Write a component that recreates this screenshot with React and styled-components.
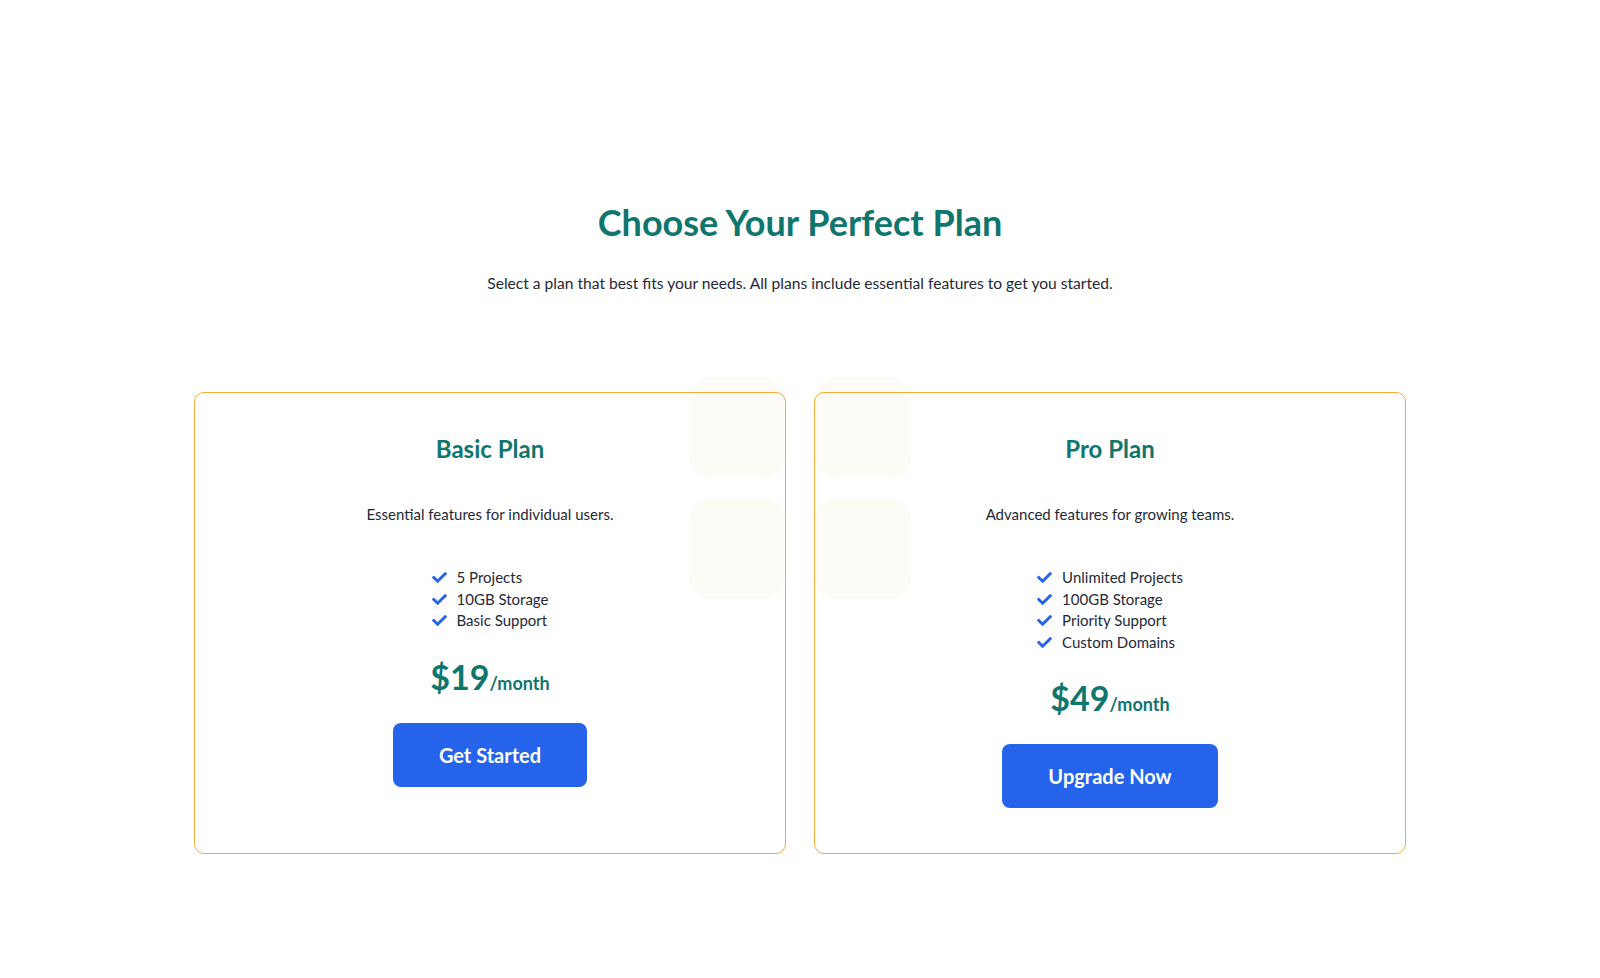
import React from 'react'
import styled, { createGlobalStyle } from 'styled-components'
import { FaCheck } from 'react-icons/fa'

const GlobalStyle = createGlobalStyle`
    body {
        margin: 0;
        background: #fff;
        font-family: Lato, "Noto Sans", sans-serif;
        color: #1f2937;
    }
`;

const plans = [
    {
        name: 'Basic Plan',
        description: 'Essential features for individual users.',
        features: ['5 Projects', '10GB Storage', 'Basic Support'],
        price: '$19',
        cta: 'Get Started',
    },
    {
        name: 'Pro Plan',
        description: 'Advanced features for growing teams.',
        features: ['Unlimited Projects', '100GB Storage', 'Priority Support', 'Custom Domains'],
        price: '$49',
        cta: 'Upgrade Now',
    },
];

const App = () => {
  return (
    <>
        <GlobalStyle />
        <Section>
            <Title>Choose Your Perfect Plan</Title>
            <Subtitle>Select a plan that best fits your needs. All plans include essential features to get you started.</Subtitle>

            <CardsArea>
                <Blobs>
                    <Blob />
                    <Blob />
                    <Blob />
                    <Blob />
                </Blobs>
                <Grid>
                    {plans.map(plan => (
                        <Card key={plan.name}>
                            <PlanName>{plan.name}</PlanName>
                            <PlanDesc>{plan.description}</PlanDesc>
                            <Features>
                                {plan.features.map(f => (
                                    <Feature key={f}>
                                        <FaCheck size={15} color="#2563eb" />
                                        <span>{f}</span>
                                    </Feature>
                                ))}
                            </Features>
                            <Price>{plan.price}<Per>/month</Per></Price>
                            <CtaButton>{plan.cta}</CtaButton>
                        </Card>
                    ))}
                </Grid>
            </CardsArea>
        </Section>
    </>
  )
}

const Section = styled.section`
    padding: 202px 0 120px;
    display: flex;
    flex-direction: column;
    align-items: center;
`;

const Title = styled.h2`
    margin: 0;
    font-size: 36px;
    line-height: 40px;
    font-weight: 700;
    color: #0f766e;
`;

const Subtitle = styled.p`
    margin: 29px 0 0;
    font-size: 15.6px;
    line-height: 24px;
    color: #1f2937;
`;

const CardsArea = styled.div`
    position: relative;
    margin-top: 97px;
    width: 1212px;
`;

const Blobs = styled.div`
    position: absolute;
    top: -15px;
    left: 50%;
    transform: translateX(-50%);
    display: grid;
    grid-template-columns: 98px 98px;
    column-gap: 27px;
    row-gap: 22px;
    z-index: 0;
`;

const Blob = styled.div`
    width: 98px;
    height: 100px;
    border-radius: 22px;
    background: #fcfbf5;
`;

const Grid = styled.div`
    position: relative;
    z-index: 1;
    display: grid;
    grid-template-columns: 1fr 1fr;
    gap: 28px;
`;

const Card = styled.div`
    border: 1px solid #f5ab3b;
    border-radius: 10px;
    padding: 40px 24px 45px;
    display: flex;
    flex-direction: column;
    align-items: center;
`;

const PlanName = styled.h3`
    margin: 0;
    font-size: 24px;
    line-height: 32px;
    font-weight: 700;
    color: #0f766e;
`;

const PlanDesc = styled.p`
    margin: 37px 0 0;
    font-size: 15px;
    line-height: 24px;
    color: #1f2937;
`;

const Features = styled.ul`
    list-style: none;
    margin: 41px 0 0;
    padding: 0;
    display: flex;
    flex-direction: column;
`;

const Feature = styled.li`
    display: flex;
    align-items: center;
    gap: 10px;
    font-size: 15px;
    line-height: 21.5px;
    color: #1f2937;
`;

const Price = styled.div`
    margin-top: 27px;
    font-size: 34px;
    line-height: 36px;
    font-weight: 700;
    color: #0f766e;
`;

const Per = styled.span`
    font-size: 18px;
    font-weight: 700;
`;

const CtaButton = styled.button`
    margin-top: 22px;
    border: none;
    border-radius: 8px;
    background: #2563eb;
    color: #fff;
    font-family: inherit;
    font-size: 20px;
    line-height: 28px;
    font-weight: 700;
    padding: 18px 46px;
    cursor: pointer;
`;

export default App;
